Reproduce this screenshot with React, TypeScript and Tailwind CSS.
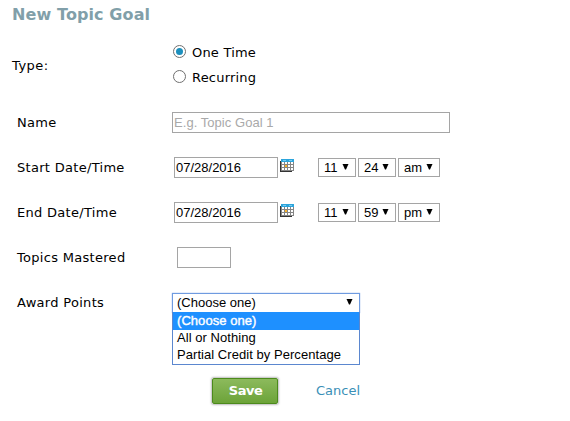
import type { ReactNode } from 'react';

const AWARD_OPTIONS = ['(Choose one)', 'All or Nothing', 'Partial Credit by Percentage'];

function Row({ label, children }: { label: string; children: ReactNode }) {
  return (
    <div className="flex h-[45px] items-center pl-[17px]">
      <div className="w-[155px] shrink-0">{label}</div>
      {children}
    </div>
  );
}

function Arrow() {
  return (
    <svg className="mb-[2px] shrink-0" width="7" height="6" viewBox="0 0 7 6" fill="#000">
      <path d="M.5 0h6L4 5.6H3z" />
    </svg>
  );
}

function TimeSelect({ value, className }: { value: string; className: string }) {
  return (
    <button
      className={`flex h-[19px] items-center justify-between border border-[#a5a5a5] bg-white pl-[5px] pr-[6px] font-['Liberation_Sans',sans-serif] text-[13px] leading-[17px] tracking-normal ${className}`}
    >
      {value}
      <Arrow />
    </button>
  );
}

function CalendarIcon() {
  return (
    <svg className="mb-[3px] ml-[2px] shrink-0" width="14" height="14" viewBox="0 0 14 14" shapeRendering="crispEdges">
      <path d="M0 2h2v10h10v1H0z" fill="#333" />
      <path d="M1 3h13v9H1z" fill="#858585" />
      <path d="M1 0h13v3H1z" fill="#2ca5dc" />
      <path d="M3 1h3v1H3zM9 1h3v1H9z" fill="#79caf0" />
      <path
        d="M2 3h2v2H2zM5 3h2v2H5zM8 3h2v2H8zM11 3h2v2h-2zM2 6h2v2H2zM8 6h2v2H8zM11 6h2v2h-2zM2 9h2v2H2zM5 9h2v2H5zM8 9h2v2H8zM11 9h2v2h-2z"
        fill="#fff"
      />
      <path d="M5 6h2v2H5z" fill="#fbb52b" />
    </svg>
  );
}

function DateTime({ date, hour, minute, period }: { date: string; hour: string; minute: string; period: string }) {
  return (
    <div className="flex items-center pl-[2px]">
      <input
        className="h-[21px] w-[104px] border border-[#a5a5a5] px-px font-['Liberation_Sans',sans-serif] text-[13px] tracking-normal"
        defaultValue={date}
      />
      <CalendarIcon />
      <div className="ml-6 flex gap-[2px]">
        <TimeSelect value={hour} className="w-[38px]" />
        <TimeSelect value={minute} className="w-[38px]" />
        <TimeSelect value={period} className="w-[42px]" />
      </div>
    </div>
  );
}

function Radio({ label, checked }: { label: string; checked?: boolean }) {
  return (
    <label className="flex h-[25px] items-center gap-[6px]">
      <span className="flex size-[13px] items-center justify-center rounded-full border border-[#707070]">
        {checked && <span className="size-[7px] rounded-full bg-[#1c8fbd]" />}
      </span>
      <span className="pt-[2px] tracking-[0.2px]">{label}</span>
    </label>
  );
}

export default function App() {
  return (
    <div className="h-[421px] w-[570px] bg-white font-['DejaVu_Sans',sans-serif] text-[13px] tracking-[0.3px] text-black">
      <h1 className="h-[28px] pl-[12px] text-[16px] leading-[30px] font-bold tracking-[0.1px] text-[#819fa9]">
        New Topic Goal
      </h1>

      <div className="flex h-[72px] items-start pt-[11px] pl-[12px]">
        <div className="w-[161px] pt-[17px] tracking-[0.5px]">Type:</div>
        <div>
          <Radio label="One Time" checked />
          <Radio label="Recurring" />
        </div>
      </div>

      <Row label="Name">
        <input
          className="h-[21px] w-[278px] border border-[#a5a5a5] px-px font-['Liberation_Sans',sans-serif] text-[13px] tracking-[0.05px] placeholder:text-[#a9a9a9]"
          placeholder="E.g. Topic Goal 1"
        />
      </Row>
      <Row label="Start Date/Time">
        <DateTime date="07/28/2016" hour="11" minute="24" period="am" />
      </Row>
      <Row label="End Date/Time">
        <DateTime date="07/28/2016" hour="11" minute="59" period="pm" />
      </Row>
      <Row label="Topics Mastered">
        <input className="ml-[5px] h-[21px] w-[54px] border border-[#a5a5a5]" />
      </Row>
      <Row label="Award Points">
        <div className="relative mt-px font-['Liberation_Sans',sans-serif] tracking-normal">
          <button className="flex h-[20px] w-[188px] items-center justify-between border border-[#6f9be0] pr-[6px] pl-[4px] shadow-[0_0_1px_#6f9be0]">
            (Choose one)
            <Arrow />
          </button>
          <ul className="absolute top-[19px] left-0 w-[188px] border border-t-0 border-[#5b87cf] bg-white tracking-[0.05px]">
            {AWARD_OPTIONS.map((option, i) => (
              <li
                key={option}
                className={`pl-[4px] ${i === 0 ? 'h-[18px] bg-[#1e90ff] leading-[17px] text-white [-webkit-text-stroke:0.4px_white]' : 'h-[17px] leading-[15px]'}`}
              >
                {option}
              </li>
            ))}
          </ul>
        </div>
      </Row>

      <div className="flex items-center pt-[53px] pl-[212px] tracking-normal">
        <button className="h-[26px] w-[66px] rounded-[2px] border border-[#4c8a1c] bg-linear-to-b from-[#8cba5c] to-[#6ca338] pl-px font-bold tracking-[-0.5px] text-white shadow-[0_0_2px_1px_#bbb]">
          Save
        </button>
        <a className="ml-[38px] text-[#3a8fb7]">Cancel</a>
      </div>
    </div>
  );
}
